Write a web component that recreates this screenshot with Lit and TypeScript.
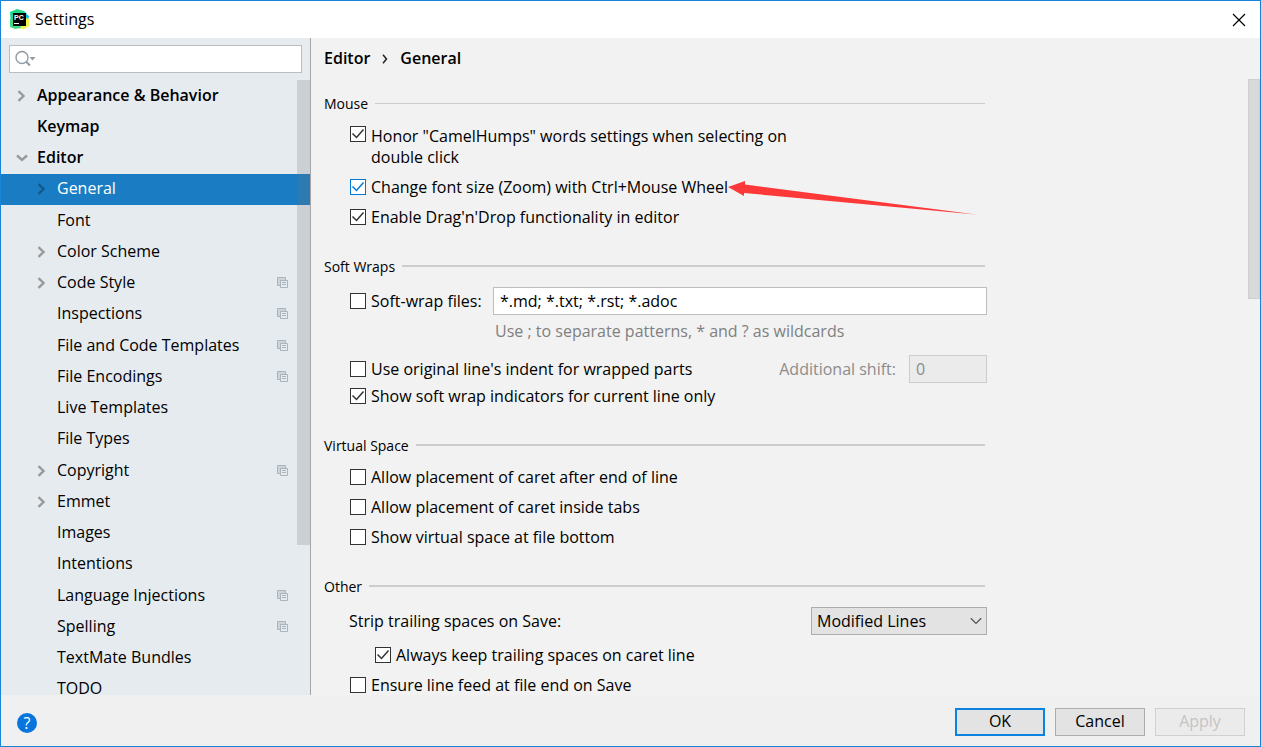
import { LitElement, html, css, svg, nothing } from "lit";
import { customElement, property, state } from "lit/decorators.js";
import { classMap } from "lit/directives/class-map.js";

interface TreeItem {
  label: string;
  level: 0 | 1;
  arrow?: "right" | "down";
  project?: boolean;
}

const TREE: TreeItem[] = [
  { label: "Appearance & Behavior", level: 0, arrow: "right" },
  { label: "Keymap", level: 0 },
  { label: "Editor", level: 0, arrow: "down" },
  { label: "General", level: 1, arrow: "right" },
  { label: "Font", level: 1 },
  { label: "Color Scheme", level: 1, arrow: "right" },
  { label: "Code Style", level: 1, arrow: "right", project: true },
  { label: "Inspections", level: 1, project: true },
  { label: "File and Code Templates", level: 1, project: true },
  { label: "File Encodings", level: 1, project: true },
  { label: "Live Templates", level: 1 },
  { label: "File Types", level: 1 },
  { label: "Copyright", level: 1, arrow: "right", project: true },
  { label: "Emmet", level: 1, arrow: "right" },
  { label: "Images", level: 1 },
  { label: "Intentions", level: 1 },
  { label: "Language Injections", level: 1, project: true },
  { label: "Spelling", level: 1, project: true },
  { label: "TextMate Bundles", level: 1 },
  { label: "TODO", level: 1 },
];

@customElement("check-row")
class CheckRow extends LitElement {
  @property() label = "";
  @property({ type: Boolean }) checked = false;
  @property({ type: Boolean }) active = false;
  @property({ type: Boolean }) multiline = false;

  static styles = css`
    :host {
      display: block;
    }
    .row {
      display: inline-flex;
      align-items: center;
      gap: 5px;
      min-height: var(--row-height, 30px);
      line-height: 21px;
    }
    .multiline {
      align-items: flex-start;
      max-width: 460px;
    }
    .box {
      display: grid;
      flex: none;
      width: 16px;
      height: 16px;
    }
    .input {
      grid-area: 1 / 1;
      appearance: none;
      box-sizing: border-box;
      margin: 0;
      width: 16px;
      height: 16px;
      border: 1px solid #333;
      background: #fff;
    }
    .mark {
      grid-area: 1 / 1;
      pointer-events: none;
      fill: none;
      stroke: #333;
      stroke-width: 1.5;
    }
    .active .input {
      border-color: #0078d7;
    }
    .active .mark {
      stroke: #0078d7;
    }
  `;

  private toggle(e: Event) {
    this.checked = (e.target as HTMLInputElement).checked;
  }

  render() {
    return html`<label
      class=${classMap({ row: true, multiline: this.multiline, active: this.active })}
    >
      <span class="box">
        <input class="input" type="checkbox" .checked=${this.checked} @change=${this.toggle} />
        ${this.checked
          ? html`<svg class="mark" width="16" height="16" viewBox="0 0 16 16">
              <path d="M2.500 7.500 6.500 11.500 13.500 3.500" />
            </svg>`
          : nothing}
      </span>
      <span>${this.label}</span>
    </label>`;
  }
}

@customElement("settings-tree")
class SettingsTree extends LitElement {
  @state() private selected = "General";

  static styles = css`
    :host {
      display: flex;
      flex-direction: column;
      min-height: 0;
      background: #e6ebf0;
      border-right: 1px solid #a6a6a6;
    }
    .search {
      display: flex;
      align-items: center;
      gap: 6px;
      margin: 7px 8px;
      height: 26px;
      padding-left: 5px;
      border: 1px solid #bdbdbd;
      background: #fff;
    }
    .query {
      flex: 1;
      min-width: 0;
      border: 0;
      outline: 0;
      padding: 0;
      background: none;
      font: inherit;
    }
    .viewport {
      position: relative;
      flex: 1;
      min-height: 0;
      overflow: hidden;
    }
    .list {
      margin: 0;
      padding: 1px 0 0;
      list-style: none;
    }
    .item:nth-child(4n) {
      margin-bottom: 1px;
    }
    .node {
      display: flex;
      align-items: center;
      box-sizing: border-box;
      width: 100%;
      height: 31px;
      padding: 0 21px 2px 14px;
      border: 0;
      background: none;
      color: #000;
      font: inherit;
      text-align: left;
    }
    .top {
      font-weight: 600;
    }
    .nested {
      padding-left: 34px;
    }
    .text {
      flex: 1;
      margin-left: 10px;
    }
    .chevron {
      flex: none;
      fill: none;
      stroke: #999;
      stroke-width: 2.4;
    }
    .selected {
      background: #1a7dc4;
      color: #fff;
    }
    .selected .chevron {
      stroke: #11598c;
    }
    .thumb {
      position: absolute;
      top: 0;
      right: 0;
      width: 13px;
      height: 465px;
      background: rgba(115, 115, 115, 0.22);
    }
  `;

  private renderChevron(arrow?: "right" | "down") {
    const d = arrow === "down" ? "M2 3.500 7 8 12 3.500" : "M3.500 1.200 8.500 6 3.500 10.800";
    return svg`<svg class="chevron" width="12" height="12" viewBox="0 0 12 12" overflow="visible">
      ${arrow ? svg`<path d=${d} />` : nothing}
    </svg>`;
  }

  private renderProjectIcon() {
    return html`<svg width="12" height="12" viewBox="0 0 12 12" fill="none" stroke="#a9b4bd">
      <path d="M.5.5H8.500V3.500H3.500V8.500H.5Z" fill="#cdd4da" />
      <path d="M3.500 3.500H10.500V10.500H3.500Z" fill="#e6ebf0" />
      <path d="M5 5.500H9M5 7.500H9" />
    </svg>`;
  }

  render() {
    return html`
      <label class="search">
        <svg width="21" height="18" viewBox="0 0 21 18" fill="none" stroke="#919ba3">
          <circle cx="7" cy="7.5" r="6" stroke-width="1.4" />
          <path d="M11.200 11.800 15 15.500" stroke-width="2" />
          <path d="M14.500 7H20.500L17.500 10.500Z" fill="#919ba3" stroke="none" />
        </svg>
        <input class="query" type="text" aria-label="Search settings" />
      </label>
      <div class="viewport">
        <ul class="list">
          ${TREE.map(
            (item) => html`<li class="item">
              <button
                class=${classMap({
                  node: true,
                  top: item.level === 0,
                  nested: item.level === 1,
                  selected: item.label === this.selected,
                })}
                @click=${() => (this.selected = item.label)}
              >
                ${this.renderChevron(item.arrow)}
                <span class="text">${item.label}</span>
                ${item.project ? this.renderProjectIcon() : nothing}
              </button>
            </li>`
          )}
        </ul>
        <div class="thumb"></div>
      </div>
    `;
  }
}

@customElement("general-page")
class GeneralPage extends LitElement {
  static styles = css`
    :host {
      display: flex;
      flex-direction: column;
      min-height: 0;
      min-width: 0;
    }
    .crumbs {
      display: flex;
      align-items: center;
      gap: 12px;
      height: 41px;
      padding-left: 13px;
      font-weight: 600;
    }
    .viewport {
      position: relative;
      flex: 1;
      min-height: 0;
      overflow: hidden;
      padding: 15px 13px 0;
    }
    .form {
      max-width: 663px;
    }
    .section {
      margin: 0 0 25px;
      padding: 0;
      border: 0;
    }
    .wraps {
      margin-bottom: 27px;
    }
    .heading {
      display: flex;
      align-items: center;
      gap: 7px;
      margin: 0;
      height: 18px;
      padding: 0 2px 2px 0;
      font-size: 14px;
      font-weight: 400;
    }
    .heading::after {
      content: "";
      flex: 1;
      height: 2px;
      background: #ccc;
    }
    .mouse .heading::after {
      height: 1px;
    }
    .body {
      padding: 9px 0 0 26px;
    }
    .mouse .body {
      padding-top: 12px;
    }
    .space .body {
      padding-top: 6px;
    }
    .wrapped {
      margin-bottom: 4px;
    }
    .pointed {
      position: relative;
      width: fit-content;
    }
    .pointer {
      position: absolute;
      left: 100%;
      top: 8px;
      fill: #fd3838;
      pointer-events: none;
    }
    .line {
      display: flex;
      align-items: center;
      justify-content: space-between;
      height: 30px;
    }
    .shift-line {
      margin-top: 8px;
    }
    .tight {
      --row-height: 24px;
    }
    .files {
      width: 494px;
    }
    .field {
      box-sizing: border-box;
      height: 28px;
      padding: 0 6px;
      border: 1px solid #bdbdbd;
      border-radius: 0;
      background: #fff;
      color: #000;
      font: inherit;
    }
    .hint {
      margin: 0 0 0 145px;
      line-height: 30px;
      color: #808080;
    }
    .shift {
      display: flex;
      align-items: center;
      gap: 13px;
      color: #8c8c8c;
    }
    .number {
      width: 78px;
      border-color: #ccc;
      background: #ebebeb;
      color: #8c8c8c;
    }
    .combo {
      display: grid;
      align-items: center;
      width: 176px;
    }
    .select {
      grid-area: 1 / 1;
      appearance: none;
      border-color: #adadad;
      background: #e3e3e3;
      padding: 0 5px;
    }
    .caret {
      grid-area: 1 / 1;
      justify-self: end;
      margin-right: 5px;
      pointer-events: none;
      fill: none;
      stroke: #555;
      stroke-width: 1.3;
    }
    .strip {
      margin: 0 0 4px -1px;
    }
    .inner {
      margin-left: 25px;
    }
    .thumb {
      position: absolute;
      top: 0;
      right: 0;
      box-sizing: border-box;
      width: 12px;
      height: 220px;
      border: 1px solid #cfcfcf;
      background: #d9d9d9;
    }
  `;

  render() {
    return html`
      <nav class="crumbs">
        <span>Editor</span>
        <svg width="6" height="10" viewBox="0 0 6 10" fill="none" stroke="#222" stroke-width="1.5">
          <path d="M1 .8 4.500 5 1 9.200" />
        </svg>
        <span>General</span>
      </nav>
      <div class="viewport">
        <div class="form">
          <section class="section mouse">
            <h2 class="heading">Mouse</h2>
            <div class="body">
              <check-row
                class="wrapped"
                label='Honor "CamelHumps" words settings when selecting on double click'
                checked
                multiline
              ></check-row>
              <div class="pointed">
                <check-row
                  label="Change font size (Zoom) with Ctrl+Mouse Wheel"
                  checked
                  active
                ></check-row>
                <svg class="pointer" width="248" height="36" viewBox="0 0 248 36">
                  <path d="M0 7 17 1V4.500L248 34.500 16 13V16Z" />
                </svg>
              </div>
              <check-row label="Enable Drag'n'Drop functionality in editor" checked></check-row>
            </div>
          </section>

          <section class="section wraps">
            <h2 class="heading">Soft Wraps</h2>
            <div class="body">
              <div class="line">
                <check-row label="Soft-wrap files:"></check-row>
                <input
                  class="field files"
                  type="text"
                  aria-label="Soft-wrap files"
                  value="*.md; *.txt; *.rst; *.adoc"
                />
              </div>
              <p class="hint">Use ; to separate patterns, * and ? as wildcards</p>
              <div class="line shift-line">
                <check-row label="Use original line's indent for wrapped parts"></check-row>
                <label class="shift">
                  Additional shift:
                  <input class="field number" type="text" value="0" disabled />
                </label>
              </div>
              <check-row
                class="tight"
                label="Show soft wrap indicators for current line only"
                checked
              ></check-row>
            </div>
          </section>

          <section class="section space">
            <h2 class="heading">Virtual Space</h2>
            <div class="body">
              <check-row label="Allow placement of caret after end of line"></check-row>
              <check-row label="Allow placement of caret inside tabs"></check-row>
              <check-row label="Show virtual space at file bottom"></check-row>
            </div>
          </section>

          <section class="section">
            <h2 class="heading">Other</h2>
            <div class="body">
              <div class="line strip">
                <label for="strip">Strip trailing spaces on Save:</label>
                <div class="combo">
                  <select class="field select" id="strip">
                    <option>None</option>
                    <option selected>Modified Lines</option>
                    <option>All</option>
                  </select>
                  <svg class="caret" width="12" height="8" viewBox="0 0 12 8">
                    <path d="M.8 1.200 6 6.400 11.200 1.200" />
                  </svg>
                </div>
              </div>
              <check-row
                class="inner"
                label="Always keep trailing spaces on caret line"
                checked
              ></check-row>
              <check-row label="Ensure line feed at file end on Save"></check-row>
            </div>
          </section>
        </div>
        <div class="thumb"></div>
      </div>
    `;
  }
}

@customElement("app-root")
class AppRoot extends LitElement {
  static styles = css`
    :host {
      display: flex;
      flex-direction: column;
      box-sizing: border-box;
      height: 100vh;
      border: 1px solid #1883d7;
      background: #f2f2f2;
      color: #000;
      font: 16px/21px "Open Sans", "Noto Sans", sans-serif;
    }
    .title {
      display: flex;
      align-items: center;
      flex: none;
      height: 37px;
      padding: 0 14px 0 8px;
      background: #fff;
    }
    .name {
      flex: 1;
      margin: 0 0 0 5px;
      font-size: 16px;
      font-weight: 400;
    }
    .close {
      display: flex;
      padding: 0;
      border: 0;
      background: none;
    }
    .panes {
      display: grid;
      grid-template-columns: 310px 1fr;
      flex: 1;
      min-height: 0;
    }
    .footer {
      display: flex;
      align-items: center;
      gap: 10px;
      box-sizing: border-box;
      flex: none;
      height: 51px;
      padding: 2px 15px 0;
      background: #f0f0f0;
    }
    .help {
      display: grid;
      place-items: center;
      width: 20px;
      height: 20px;
      margin: 2px auto 0 1px;
      border: 0;
      padding: 0;
      border-radius: 50%;
      background: #0675dd;
      color: #fff;
      font: inherit;
    }
    .button {
      width: 90px;
      height: 28px;
      padding: 0;
      border: 1px solid #adadad;
      background: #e3e3e3;
      color: #000;
      font: inherit;
    }
    .primary {
      border: 2px solid #0a84e0;
    }
    .button:disabled {
      border-color: #d0d0d0;
      background: #ebebeb;
      color: #c4c4c4;
    }
  `;

  render() {
    return html`
      <header class="title">
        <svg width="21" height="21" viewBox="0 0 21 21">
          <path d="M1 3 8 0 15 2 18 5 12 12 2 18Z" fill="#21d789" />
          <path d="M15 3 20 7 19 12 14 10Z" fill="#07c3f2" />
          <path d="M17 9 20 10V17L15 20 8 19 12 10Z" fill="#f3f04a" />
          <path d="M1 10V18L6 20 12 19 10 13Z" fill="#3ddc84" />
          <rect x="4" y="4" width="13" height="13" />
          <text x="5" y="11" fill="#fff" font-family="Liberation Sans" font-size="7" font-weight="700">PC</text>
          <path d="M5 14.500H10" stroke="#fff" />
        </svg>
        <h1 class="name">Settings</h1>
        <button class="close" aria-label="Close">
          <svg width="14" height="14" viewBox="0 0 14 14" stroke="#000" stroke-width="1.2">
            <path d="M1 1 13 13M13 1 1 13" />
          </svg>
        </button>
      </header>
      <div class="panes">
        <settings-tree></settings-tree>
        <general-page></general-page>
      </div>
      <footer class="footer">
        <button class="help" aria-label="Help">?</button>
        <button class="button primary">OK</button>
        <button class="button">Cancel</button>
        <button class="button" disabled>Apply</button>
      </footer>
    `;
  }
}
